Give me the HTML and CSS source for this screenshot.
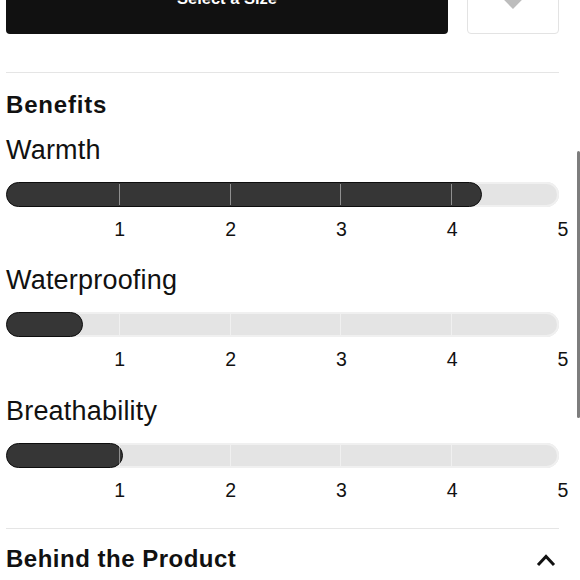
FILE: index.html
```html
<!DOCTYPE html>
<html lang="en">
<head>
<meta charset="utf-8">
<title>Benefits</title>
<link rel="stylesheet" href="styles.css">
</head>
<body>
<div class="page">
  <div class="actions">
    <button class="size-btn">Select a Size</button>
    <button class="fav-btn" aria-label="Favorite">
      <svg class="heart" viewBox="0 0 28 26" width="28" height="26"><path d="M14 25 L2.6 13.4 C-0.6 10.1 0.2 4.2 4.2 2.2 C7.6 0.5 11.4 1.6 14 4.8 C16.6 1.6 20.4 0.5 23.8 2.2 C27.8 4.2 28.6 10.1 25.4 13.4 Z" fill="#bdbdbd"/></svg>
    </button>
  </div>

  <hr class="divider first">

  <section class="benefits">
    <h2 class="section-title">Benefits</h2>

    <div class="benefit">
      <div class="benefit-name">Warmth</div>
      <div class="track">
        <div class="fill" style="width:476px"></div>
        <div class="ticks"><span></span><span></span><span></span><span></span></div>
      </div>
      <div class="scale"><span>1</span><span>2</span><span>3</span><span>4</span><span>5</span></div>
    </div>

    <div class="benefit">
      <div class="benefit-name">Waterproofing</div>
      <div class="track">
        <div class="fill" style="width:77px"></div>
        <div class="ticks"><span></span><span></span><span></span><span></span></div>
      </div>
      <div class="scale"><span>1</span><span>2</span><span>3</span><span>4</span><span>5</span></div>
    </div>

    <div class="benefit">
      <div class="benefit-name">Breathability</div>
      <div class="track">
        <div class="fill" style="width:117px"></div>
        <div class="ticks"><span></span><span></span><span></span><span></span></div>
      </div>
      <div class="scale"><span>1</span><span>2</span><span>3</span><span>4</span><span>5</span></div>
    </div>
  </section>

  <hr class="divider second">

  <div class="accordion-head">
    <h2 class="accordion-title">Behind the Product</h2>
    <svg class="chevron" viewBox="0 0 20 14" width="20" height="14"><polyline points="2,12 10,3.5 18,12" fill="none" stroke="#111" stroke-width="3"/></svg>
  </div>
</div>
<div class="scroll-indicator"></div>
</body>
</html>
```

FILE: styles.css
```css
html, body {
  margin: 0;
  padding: 0;
  background: #fff;
  overflow: hidden;
}

body {
  font-family: "Liberation Sans", Arial, Helvetica, sans-serif;
  color: #111;
}

.page {
  padding: 0 21px 0 6px;
}

.actions {
  display: flex;
  gap: 19px;
  margin-top: -40px;
  height: 74px;
}

.size-btn {
  flex: 1;
  background: #111;
  color: #fff;
  border: none;
  border-radius: 4px;
  font-family: inherit;
  font-size: 16.5px;
  font-weight: 700;
  padding: 0;
  line-height: 1;
  padding-top: 2px;
}

.fav-btn {
  width: 92px;
  background: #fff;
  border: 1px solid #e3e3e3;
  border-radius: 4px;
  padding: 0;
  display: flex;
  align-items: flex-end;
  justify-content: center;
  padding-bottom: 23px;
  box-sizing: border-box;
}

.heart {
  display: block;
}

.divider {
  border: none;
  height: 1px;
  background: #e5e5e5;
  margin: 0;
}

.divider.first {
  margin-top: 38px;
}

.section-title {
  margin: 18px 0 0;
  font-size: 24px;
  line-height: 28px;
  font-weight: 700;
  letter-spacing: 0.8px;
}

.benefit {
  display: flex;
  flex-direction: column;
}

.benefit-name {
  font-size: 27px;
  line-height: 32px;
  margin-top: 15px;
  letter-spacing: 0.2px;
}

.benefit + .benefit .benefit-name {
  margin-top: 24.3px;
}

.track {
  position: relative;
  margin-top: 16px;
  height: 25px;
  border-radius: 13px;
  background: #e4e4e4;
  box-shadow: inset 0 0 0 2px #f0f0f0;
}

.fill {
  height: 25px;
  box-sizing: border-box;
  background: #363636;
  border: 1px solid #0e0e0e;
  border-radius: 13px;
}

.ticks {
  position: absolute;
  top: 2px;
  bottom: 2px;
  left: 3px;
  display: grid;
  grid-template-columns: repeat(4, 110.8px);
  pointer-events: none;
}

.ticks span {
  border-right: 1px solid rgba(255, 255, 255, 0.45);
}

.scale {
  display: grid;
  grid-template-columns: repeat(5, 110.8px);
  margin: 11px 0 0 3px;
  font-size: 19.5px;
  line-height: 22px;
}

.scale span {
  justify-self: end;
  transform: translateX(50%);
}

.divider.second {
  margin-top: 27.6px;
}

.accordion-head {
  display: flex;
  align-items: center;
  justify-content: space-between;
  margin-top: 16px;
  padding-right: 3px;
}

.accordion-title {
  margin: 0;
  font-size: 24px;
  line-height: 28px;
  font-weight: 700;
  letter-spacing: 0.5px;
}

.chevron {
  display: block;
  margin-top: 2px;
}

.scroll-indicator {
  position: fixed;
  left: 577px;
  top: 151px;
  width: 3px;
  height: 267px;
  background: #7d7d7d;
  border-radius: 1.5px;
}
```
